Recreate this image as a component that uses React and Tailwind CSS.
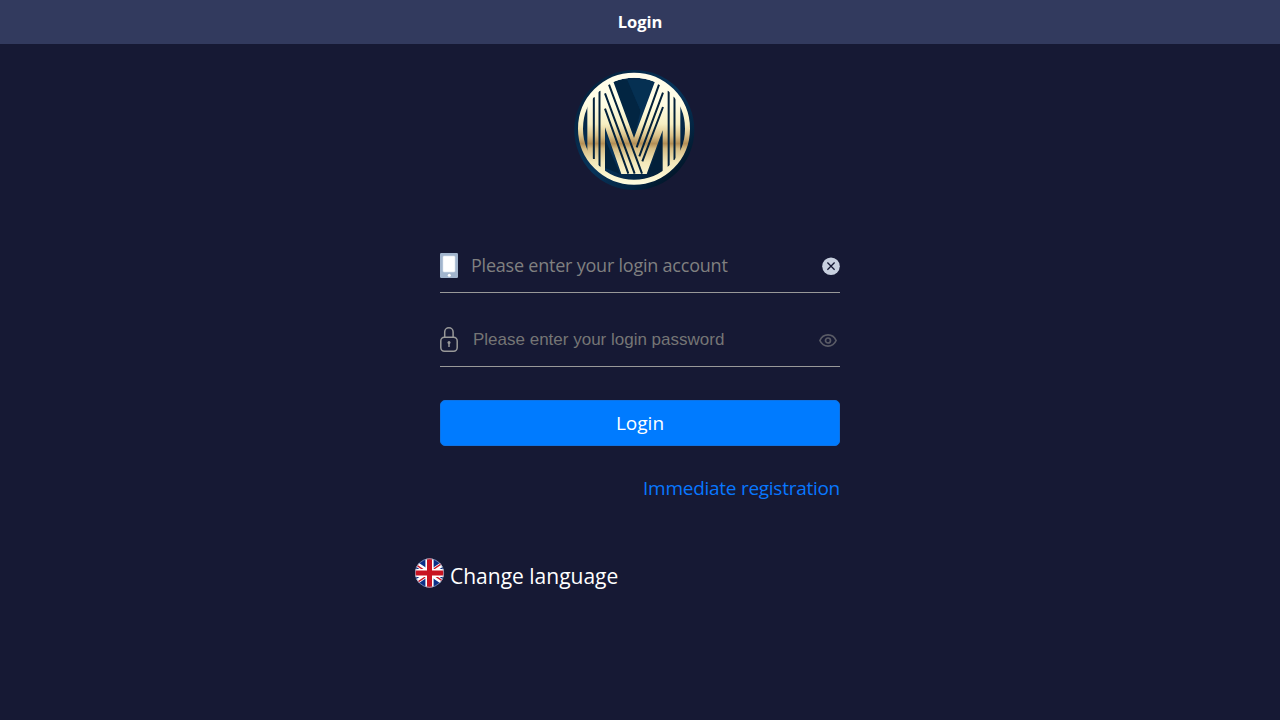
import React from "react";

function Logo() {
  return (
    <svg viewBox="0 0 390 390" className="block h-[130px] w-[130px]">
      <defs>
        <linearGradient id="gold" gradientUnits="userSpaceOnUse" x1="0" y1="25" x2="0" y2="362">
          <stop offset="0" stopColor="#fffdec" />
          <stop offset="0.28" stopColor="#fffde4" />
          <stop offset="0.46" stopColor="#f7efc3" />
          <stop offset="0.56" stopColor="#dcc48c" />
          <stop offset="0.635" stopColor="#b48f56" />
          <stop offset="0.68" stopColor="#d5bc84" />
          <stop offset="0.8" stopColor="#f3e8b9" />
          <stop offset="1" stopColor="#fffde0" />
        </linearGradient>
        <linearGradient id="navy" x1="0" y1="0" x2="1" y2="1">
          <stop offset="0" stopColor="#021c37" />
          <stop offset="0.3" stopColor="#052a4b" />
          <stop offset="0.5" stopColor="#073359" />
          <stop offset="0.72" stopColor="#042644" />
          <stop offset="0.85" stopColor="#02182c" />
          <stop offset="1" stopColor="#031d34" />
        </linearGradient>
        <clipPath id="disc">
          <circle cx="192" cy="194" r="160" />
        </clipPath>
      </defs>
      <circle cx="193" cy="198" r="180" fill="url(#navy)" />
      <path d="M130 48H172L212 140L192 222Z" fill="#022542" />
      <path d="M172 48H256L212 140Z" fill="#053052" />
      <path d="M105 225L150 330L105 312Z" fill="#02223c" />
      <path d="M278 210V312L234 330Z" fill="#02203a" />
      <g clipPath="url(#disc)">
        <path
          d="M52 20H118L192 222L254 55L270 20H331V380H278V199L230 330H154L105 190V380H52Z"
          fill="url(#gold)"
        />
        <path d="M128 54Q192 28 257 54L275 20H110Z" fill="url(#gold)" />
        <path
          d="M71.500 100V285M88.500 80V308M296 80V308M313.500 98V288M117 62L216 329M105 88L194 329M105 134L175 329M267 62L200 250M279 86L208 277M279 129L217 292"
          fill="none"
          stroke="#04223b"
          strokeWidth="6"
        />
      </g>
      <circle cx="192" cy="194" r="160.500" fill="none" stroke="url(#gold)" strokeWidth="15" />
    </svg>
  );
}

function PhoneIcon() {
  return (
    <svg viewBox="0 0 18 25" className="block h-[25px] w-[18px]">
      <rect width="18" height="25" rx="1.200" fill="#a2b5cd" />
      <rect x="3" y="3" width="12" height="16" rx="1" fill="#fff" stroke="#dce4ef" strokeWidth="0.600" />
      <circle cx="9.300" cy="22.200" r="1.500" fill="#fff" />
    </svg>
  );
}

function LockIcon() {
  return (
    <svg viewBox="0 0 18 25" className="block h-[25px] w-[18px]" fill="none" stroke="#999" strokeWidth="1.500">
      <path d="M4.700 10.300V5A4.200 4.200 0 0 1 13.100 5V10.300" />
      <rect x="0.800" y="10.300" width="16.400" height="13.900" rx="3.600" />
      <circle cx="9" cy="15.600" r="1.500" fill="#999" stroke="none" />
      <path d="M9 15.500V20" />
    </svg>
  );
}

function ClearIcon() {
  return (
    <svg viewBox="0 0 18 18" className="block h-[18px] w-[18px]">
      <circle cx="9" cy="9.200" r="8.800" fill="#c8d0df" />
      <path d="M5.400 5.500L12.600 12.700M12.600 5.500L5.400 12.700" stroke="#161934" strokeWidth="1.300" />
    </svg>
  );
}

function EyeIcon() {
  return (
    <svg viewBox="0 0 18 13" className="block h-[13px] w-[18px]" fill="none" stroke="#5a5b66" strokeWidth="1.700">
      <path d="M0.900 6.500C2.500 2.900 5.500 0.900 9 0.900S15.500 2.900 17.100 6.500C15.500 10.100 12.500 12.100 9 12.100S2.500 10.100 0.900 6.500Z" />
      <circle cx="9" cy="6.500" r="2.500" />
    </svg>
  );
}

function FlagIcon() {
  return (
    <svg viewBox="0 0 30 30" className="block h-[30px] w-[30px]">
      <defs>
        <clipPath id="flag">
          <circle cx="14.500" cy="15" r="14.400" />
        </clipPath>
      </defs>
      <g clipPath="url(#flag)">
        <rect width="30" height="30" fill="#0b2f88" />
        <path d="M-4 2.500L33 27.500M33 2.500L-4 27.500" stroke="#fff" strokeWidth="4.800" />
        <path d="M-4 3.500L14 15.500M33 1.500L15 13.500M33 26.500L15 14.500M-4 28.500L14 16.500" stroke="#cc1423" strokeWidth="1.500" />
        <path d="M14.500 0V30M0 15H30" stroke="#fff" strokeWidth="8.200" />
        <path d="M14.500 0V30M0 15H30" stroke="#c81321" strokeWidth="5" />
      </g>
      <circle cx="14.500" cy="15" r="14.200" fill="none" stroke="#9a9fb4" strokeWidth="0.700" />
    </svg>
  );
}

export default function App() {
  return (
    <div className="flex h-screen w-full flex-col items-center overflow-hidden bg-[#161934] font-['Open_Sans',sans-serif]">
      <header className="flex h-11 w-full shrink-0 items-center justify-center bg-[#323a5e] text-[16.500px] font-bold text-white">
        <h1>Login</h1>
      </header>
      <div className="mt-5 mr-[10px] shrink-0">
        <Logo />
      </div>
      <main className="mt-[46px] flex w-[400px] shrink-0 flex-col">
        <div className="flex h-[53px] items-center border-b border-[#999] pb-px">
          <PhoneIcon />
          <span className="ml-[13px] flex-1 text-[18px] tracking-[-0.22px] whitespace-nowrap text-[#808080]">Please enter your login account</span>
          <span className="mt-px">
            <ClearIcon />
          </span>
        </div>
        <div className="mt-[21px] flex h-[53px] items-center border-b border-[#999] pb-px">
          <LockIcon />
          <span className="ml-[15px] flex-1 font-['Liberation_Sans',sans-serif] text-[17px] whitespace-nowrap text-[#757575]">Please enter your login password</span>
          <span className="mt-px mr-[3px]">
            <EyeIcon />
          </span>
        </div>
        <button className="mt-[33px] flex h-[46px] items-center justify-center rounded-[5px] border border-[#0f72e2] bg-[#007bff] text-[19px] text-white">
          Login
        </button>
        <a className="mt-[28px] self-end text-[19px] leading-[28px] tracking-[-0.27px] whitespace-nowrap text-[#0877ff]">Immediate registration</a>
        <div className="mt-[56px] -ml-[25px] flex items-start">
          <FlagIcon />
          <span className="mt-[3px] ml-[5px] text-[21px] leading-[30px] whitespace-nowrap text-white">Change language</span>
        </div>
      </main>
    </div>
  );
}
